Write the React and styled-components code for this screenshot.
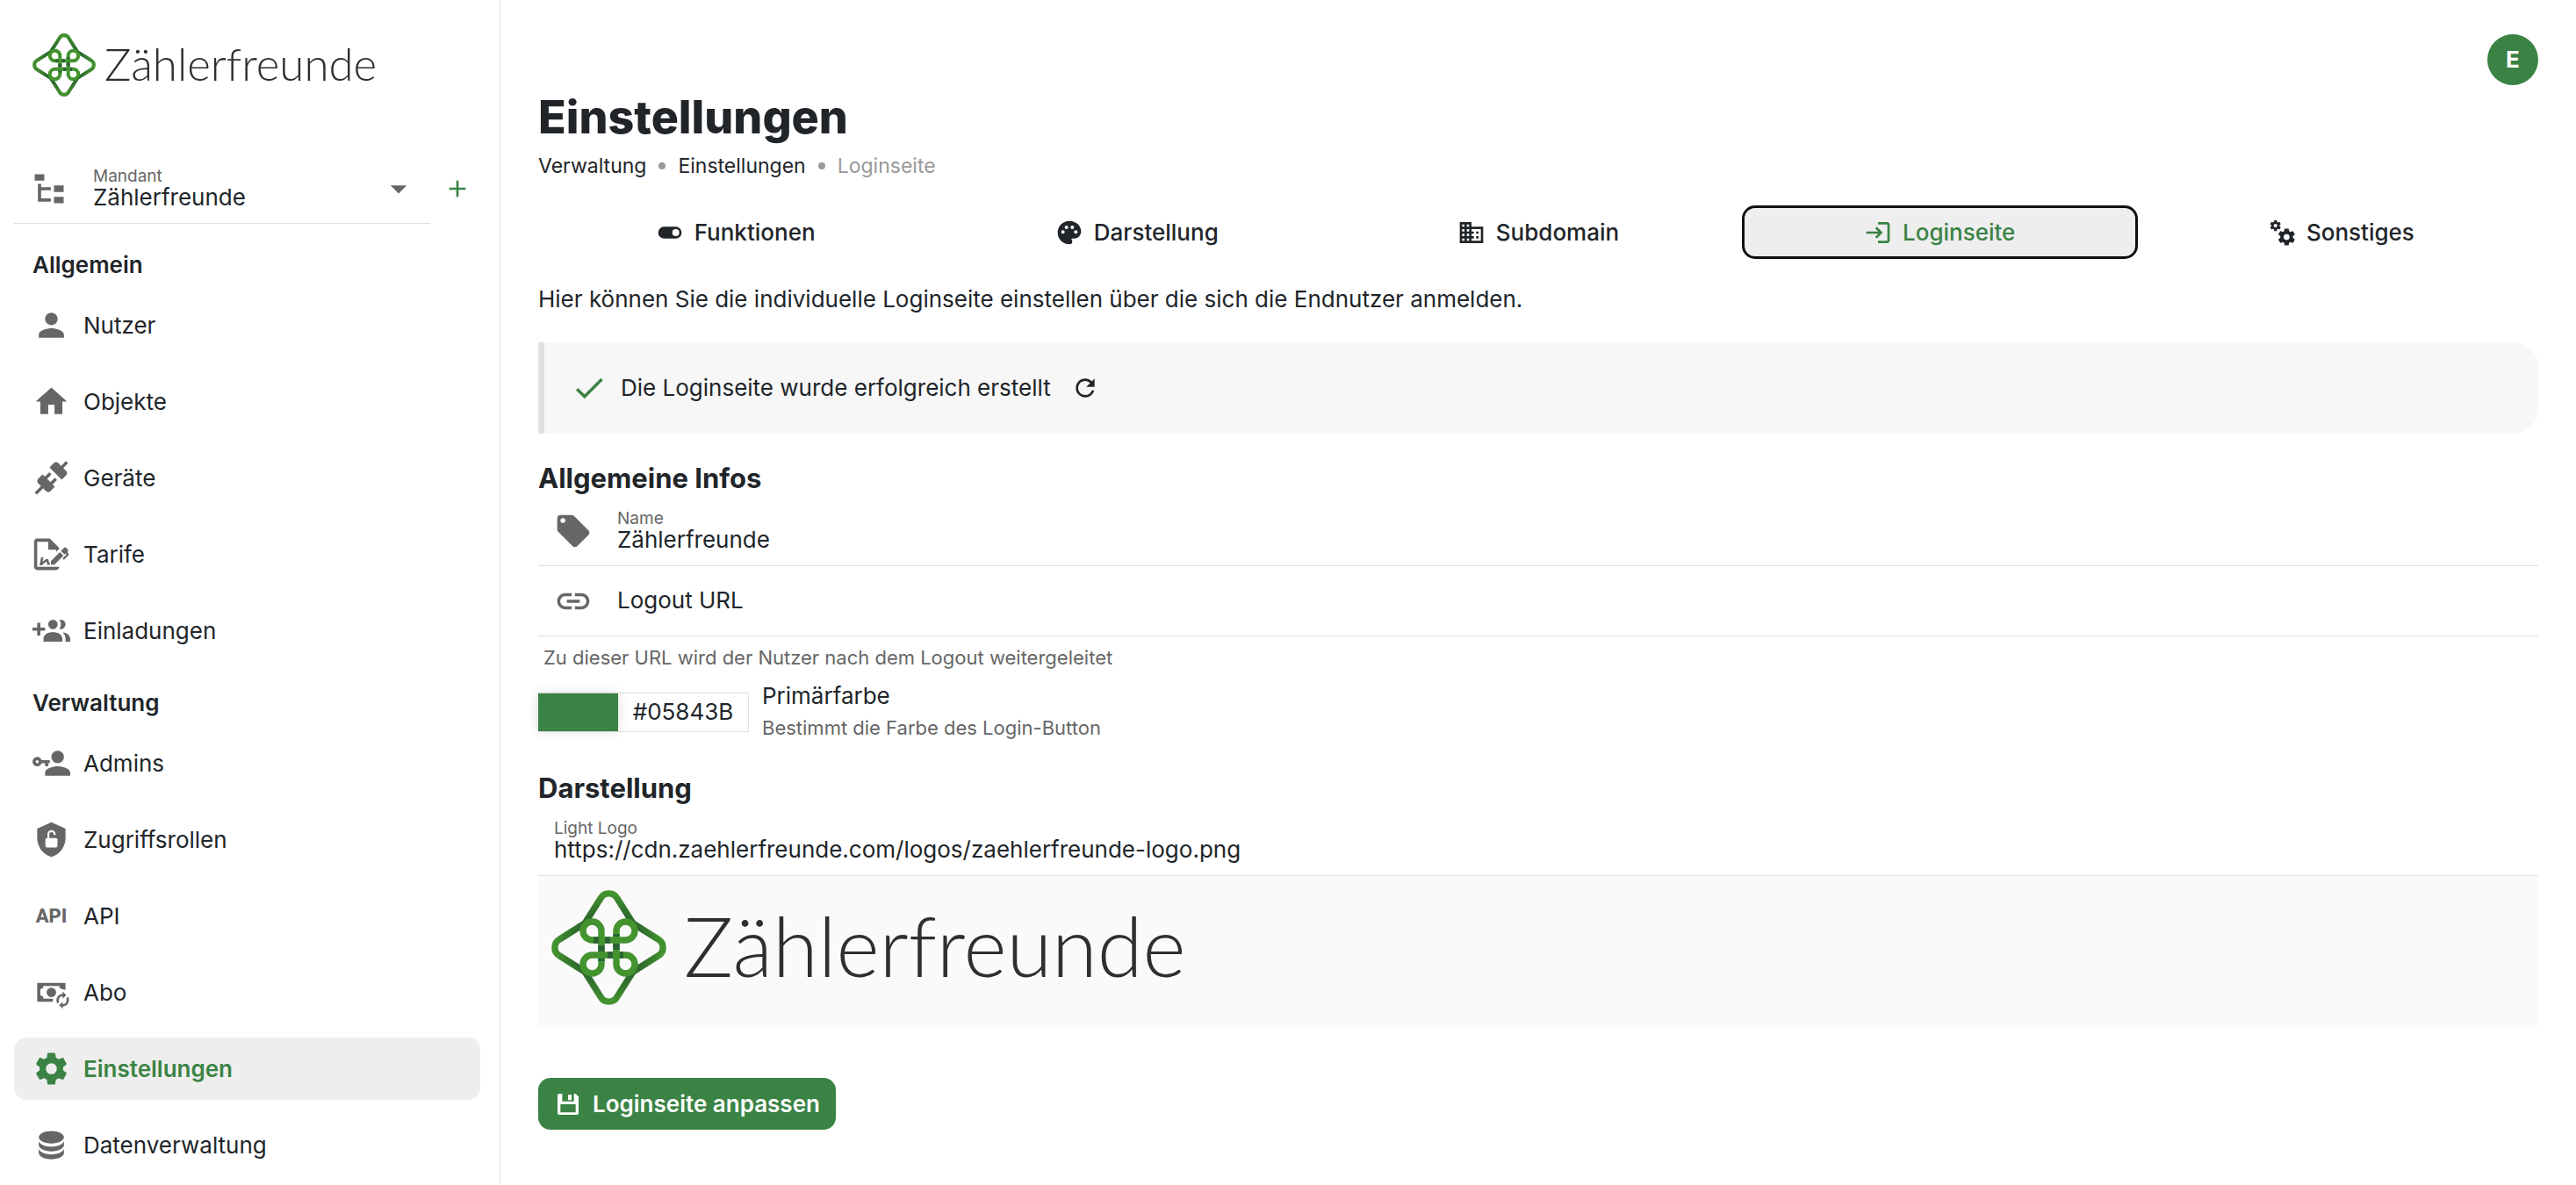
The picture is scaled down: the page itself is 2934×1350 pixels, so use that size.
import React from "react";
import styled, { createGlobalStyle, css } from "styled-components";
import {
  MdPerson,
  MdHome,
  MdPalette,
  MdBusiness,
  MdLogin,
  MdLink,
  MdCheck,
  MdRefresh,
  MdAdd,
  MdArrowDropDown,
} from "react-icons/md";

const c = {
  text: "#212529",
  muted: "#666666",
  faint: "#999999",
  green: "#3a8344",
  line: "#e0e0e0",
  active: "#eeeeee",
};

const GlobalStyle = createGlobalStyle`
  *, *::before, *::after { box-sizing: border-box; }
  body {
    margin: 0;
    background: #ffffff;
    color: ${c.text};
    font-family: Inter, "Noto Sans", sans-serif;
    font-size: 26px;
    line-height: 40px;
  }
  h1, h2, p, ul, ol { margin: 0; padding: 0; }
  ul, ol { list-style: none; }
  a { color: inherit; text-decoration: none; }
  button, input, select { font: inherit; color: inherit; }
  svg { display: block; flex: none; }
`;

/* ---------- icons ---------- */

const Svg = ({ size = 24, children, ...rest }) => (
  <svg width={size} height={size} viewBox="0 0 24 24" fill="currentColor" aria-hidden="true" {...rest}>
    {children}
  </svg>
);

const COG =
  "M12,15.5A3.5,3.5 0 0,1 8.5,12A3.5,3.5 0 0,1 12,8.5A3.5,3.5 0 0,1 15.5,12A3.5,3.5 0 0,1 12,15.5M19.43,12.97C19.47,12.65 19.5,12.33 19.5,12C19.5,11.67 19.47,11.34 19.43,11L21.54,9.37C21.73,9.22 21.78,8.95 21.66,8.73L19.66,5.27C19.54,5.05 19.27,4.96 19.05,5.05L16.56,6.05C16.04,5.66 15.5,5.32 14.87,5.07L14.5,2.42C14.46,2.18 14.25,2 14,2H10C9.75,2 9.54,2.18 9.5,2.42L9.13,5.07C8.5,5.32 7.96,5.66 7.44,6.05L4.95,5.05C4.73,4.96 4.46,5.05 4.34,5.27L2.34,8.73C2.21,8.95 2.27,9.22 2.46,9.37L4.57,11C4.53,11.34 4.5,11.67 4.5,12C4.5,12.33 4.53,12.65 4.57,12.97L2.46,14.63C2.27,14.78 2.21,15.05 2.34,15.27L4.34,18.73C4.46,18.95 4.73,19.03 4.95,18.95L7.44,17.94C7.96,18.34 8.5,18.68 9.13,18.93L9.5,21.58C9.54,21.82 9.75,22 10,22H14C14.25,22 14.46,21.82 14.5,21.58L14.87,18.93C15.5,18.67 16.04,18.34 16.56,17.94L19.05,18.95C19.27,19.03 19.54,18.95 19.66,18.73L21.66,15.27C21.78,15.05 21.73,14.78 21.54,14.63L19.43,12.97Z";

const TreeIcon = (p) => (
  <Svg {...p}>
    <path d="M3,3H9V7H3V3M15,10H21V14H15V10M15,17H21V21H15V17M13,13H7V18H13V20H7L5,20V9H7V11H13V13Z" />
  </Svg>
);
const PlugIcon = (p) => (
  <Svg {...p}>
    <path d="M21.4 7.5C22.2 8.3 22.2 9.6 21.4 10.3L18.6 13.1L10.8 5.3L13.6 2.5C14.4 1.7 15.7 1.7 16.4 2.5L18.2 4.3L21.2 1.3L22.6 2.7L19.6 5.7L21.4 7.5M15.6 13.3L14.2 11.9L11.4 14.7L9.3 12.6L12.1 9.8L10.7 8.4L7.9 11.2L6.4 9.8L3.6 12.6C2.8 13.4 2.8 14.7 3.6 15.4L5.4 17.2L1.4 21.2L2.8 22.6L6.8 18.6L8.6 20.4C9.4 21.2 10.7 21.2 11.4 20.4L14.2 17.6L12.8 16.2L15.6 13.3Z" />
  </Svg>
);
const SignIcon = (p) => (
  <Svg {...p}>
    <path d="M19.7 12.9L14 18.6H11.7V16.3L17.4 10.6L19.7 12.9M23.1 12.1C23.1 12.4 22.8 12.7 22.5 13L20 15.5L19.1 14.6L21.7 12L21.1 11.4L20.4 12.1L18.1 9.8L20.3 7.7C20.5 7.5 20.9 7.5 21.2 7.7L22.6 9.1C22.8 9.3 22.8 9.7 22.6 10C22.4 10.2 22.2 10.4 22.2 10.6C22.2 10.8 22.4 11 22.6 11.2C22.9 11.5 23.2 11.8 23.1 12.1M3 20V4H10V9H15V10.5L17 8.5V8L11 2H3C1.9 2 1 2.9 1 4V20C1 21.1 1.9 22 3 22H15C16.1 22 17 21.1 17 20H3M11 17.1C10.8 17.1 10.6 17.2 10.5 17.2L10 15H8.5L6.4 16.7L7 14H5.5L4.5 19H6L8.9 16.4L9.5 18.7H10.5L11 18.6V17.1Z" />
  </Svg>
);
const InviteIcon = (p) => (
  <Svg {...p}>
    <path d="M19 17V19H7V17S7 13 13 13 19 17 19 17M16 8A3 3 0 1 0 13 11A3 3 0 0 0 16 8M19.2 13.06A5.6 5.6 0 0 1 21 17V19H24V17S24 13.55 19.2 13.06M18 5A2.91 2.91 0 0 0 17.11 5.14A5 5 0 0 1 17.11 10.86A2.91 2.91 0 0 0 18 11A3 3 0 0 0 18 5M8 10H5V7H3V10H0V12H3V15H5V12H8Z" />
  </Svg>
);
const AdminIcon = (p) => (
  <Svg {...p}>
    <path d="M11 10V12H10V14H8V12H5.83C5.42 13.17 4.31 14 3 14A3 3 0 0 1 0 11A3 3 0 0 1 3 8C4.31 8 5.42 8.83 5.83 10H11M3 10A1 1 0 0 0 2 11A1 1 0 0 0 3 12A1 1 0 0 0 4 11A1 1 0 0 0 3 10M16 14C18.67 14 24 15.34 24 18V20H8V18C8 15.34 13.33 14 16 14M16 12A4 4 0 0 1 12 8A4 4 0 0 1 16 4A4 4 0 0 1 20 8A4 4 0 0 1 16 12Z" />
  </Svg>
);
const ShieldIcon = (p) => (
  <Svg {...p}>
    <path d="M12 1L3 5V11C3 16.55 6.84 21.74 12 23C17.16 21.74 21 16.55 21 11V5L12 1Z" />
    <rect x="8.2" y="11" width="7.7" height="6" rx="0.9" fill="#fff" />
    <path d="M10.1 11.4V8.6A2 2 0 0 1 14.1 8.6V9.1" fill="none" stroke="#fff" strokeWidth="1.2" />
  </Svg>
);
const CashIcon = (p) => (
  <Svg {...p}>
    <path d="M12 15C10.3 15 9 13.7 9 12S10.3 9 12 9 15 10.3 15 12 13.7 15 12 15M7 16C7 14.9 6.1 14 5 14V10C6.1 10 7 9.1 7 8H17C17 9.1 17.9 10 19 10V10.1C19.7 10.1 20.4 10.2 21 10.5V6H3V18H13.1C13 17.7 13 17.3 13 17C13 16.7 13 16.3 13.1 16H7Z" />
    <path
      transform="translate(38.2 -0.5) scale(-1 1)"
      d="M19 12V13.5A4 4 0 0 1 23 17.5C23 18.32 22.75 19.08 22.33 19.71L21.24 18.62C21.41 18.28 21.5 17.9 21.5 17.5A2.5 2.5 0 0 0 19 15V16.5L16.75 14.25L19 12M19 23V21.5A4 4 0 0 1 15 17.5C15 16.68 15.25 15.92 15.67 15.29L16.76 16.38C16.59 16.72 16.5 17.1 16.5 17.5A2.5 2.5 0 0 0 19 20V18.5L21.25 20.75L19 23Z"
    />
  </Svg>
);
const CogIcon = (p) => (
  <Svg {...p}>
    <path d={COG} />
  </Svg>
);
const CogsIcon = (p) => (
  <Svg {...p}>
    <path d={COG} transform="translate(1 0.5) scale(0.46)" />
    <path d={COG} transform="translate(7.4 7.1) scale(0.72)" />
  </Svg>
);
const DatabaseIcon = (p) => (
  <Svg {...p}>
    <path d="M12,3C7.58,3 4,4.79 4,7C4,9.21 7.58,11 12,11C16.42,11 20,9.21 20,7C20,4.79 16.42,3 12,3M4,9V12C4,14.21 7.58,16 12,16C16.42,16 20,14.21 20,12V9C20,11.21 16.42,13 12,13C7.58,13 4,11.21 4,9M4,14V17C4,19.21 7.58,21 12,21C16.42,21 20,19.21 20,17V14C20,16.21 16.42,18 12,18C7.58,18 4,16.21 4,14Z" />
  </Svg>
);
const ToggleIcon = (p) => (
  <Svg {...p}>
    <path d="M17,7H7A5,5 0 0,0 2,12A5,5 0 0,0 7,17H17A5,5 0 0,0 22,12A5,5 0 0,0 17,7M17,15A3,3 0 0,1 14,12A3,3 0 0,1 17,9A3,3 0 0,1 20,12A3,3 0 0,1 17,15Z" />
  </Svg>
);
const TagIcon = (p) => (
  <Svg {...p}>
    <path d="M5.5,7A1.5,1.5 0 0,1 4,5.5A1.5,1.5 0 0,1 5.5,4A1.5,1.5 0 0,1 7,5.5A1.5,1.5 0 0,1 5.5,7M21.41,11.58L12.41,2.58C12.05,2.22 11.55,2 11,2H4C2.89,2 2,2.89 2,4V11C2,11.55 2.22,12.05 2.59,12.41L11.58,21.41C11.95,21.77 12.45,22 13,22C13.55,22 14.05,21.77 14.41,21.41L21.41,14.41C21.78,14.05 22,13.55 22,13C22,12.44 21.77,11.94 21.41,11.58Z" />
  </Svg>
);
const SaveIcon = (p) => (
  <Svg {...p}>
    <path
      fillRule="evenodd"
      d="M3 4.5A1.5 1.5 0 0 1 4.5 3H7V9.5H17V3H18.5L21 5.5V19.5A1.5 1.5 0 0 1 19.5 21H4.5A1.5 1.5 0 0 1 3 19.5ZM5.5 12V19H18.5V12ZM12 4H15V8.5H12Z"
    />
  </Svg>
);

/* ---------- logo ---------- */

const LogoRow = styled.span`
  display: flex;
  align-items: flex-start;
  gap: ${(p) => (p.$large ? 20 : 10)}px;
  color: #2f2f2f;
  font-family: Lato, sans-serif;
  font-weight: 300;
  font-size: ${(p) => (p.$large ? 94 : 51)}px;
  line-height: ${(p) => (p.$large ? 126 : 70)}px;
`;

const Logo = ({ large }) => {
  const size = large ? 131 : 72;
  const id = large ? "arm-l" : "arm-s";
  return (
    <LogoRow $large={large}>
      <svg width={size} height={size} viewBox="0 0 131 131" fill="none" strokeWidth="7.4" strokeLinejoin="round" aria-hidden="true">
        <defs>
          <radialGradient id={id} gradientUnits="userSpaceOnUse" cx="65.5" cy="65.5" r="64">
            <stop offset="0.55" stopColor="#285f2c" />
            <stop offset="0.95" stopColor="#43932f" />
          </radialGradient>
        </defs>
        <path
          stroke={`url(#${id})`}
          d="M38 38L56 9.500C60 2 71 2 75 9.500L93 38L121.500 56C129 60 129 71 121.500 75L93 93L75 121.500C71 129 60 129 56 121.500L38 93L9.500 75C2 71 2 60 9.500 56Z"
        />
        <path
          stroke="#43932f"
          d="M57 46.500V84.500A10.500 10.500 0 1 1 46.500 74H84.500A10.500 10.500 0 1 1 74 84.500V46.500A10.500 10.500 0 1 1 84.500 57H46.500A10.500 10.500 0 1 1 57 46.500Z"
        />
        <path stroke="#2a6433" d="M48 57H54M61 57H67M74 50V53M74 61V68M57 63V70M57 78V81M64 74H70M78 74H82" />
      </svg>
      Zählerfreunde
    </LogoRow>
  );
};

/* ---------- shell ---------- */

const Page = styled.div`
  display: flex;
  min-height: 100vh;
`;

const Sidebar = styled.aside`
  flex: 0 0 570px;
  padding: 38px 22px 8px 16px;
  border-right: 1px solid ${c.line};
`;

const Brand = styled.a`
  display: block;
  padding-left: 21px;
  margin-bottom: 65px;
`;

const TenantRow = styled.div`
  display: flex;
  align-items: center;
  gap: 15px;
`;

const AddButton = styled.button`
  display: flex;
  margin-right: 10px;
  padding: 0;
  border: 0;
  background: none;
  color: ${c.green};
`;

const GroupTitle = styled.h2`
  margin: 27px 0 13px;
  padding-left: 21px;
  font-size: 26px;
  font-weight: 600;
`;

const NavList = styled.ul`
  display: flex;
  flex-direction: column;
  gap: 16px;
`;

const NavLink = styled.a`
  display: flex;
  align-items: center;
  gap: 15px;
  height: 71px;
  padding-left: 21px;
  border-radius: 14px;
  background: ${(p) => (p.$active ? c.active : "none")};
  color: ${(p) => (p.$active ? c.green : c.text)};
  font-weight: ${(p) => (p.$active ? 600 : 400)};
  svg { color: ${(p) => (p.$active ? c.green : c.muted)}; }
`;

const ApiMark = styled.span`
  width: 43px;
  color: ${c.muted};
  font-family: Roboto, sans-serif;
  font-size: 22px;
  font-weight: 800;
  text-align: center;
`;

const Main = styled.main`
  flex: 1;
  min-width: 0;
  padding: 39px 43px 60px;
`;

const TopBar = styled.div`
  display: flex;
  justify-content: flex-end;
`;

const Avatar = styled.button`
  width: 58px;
  height: 58px;
  padding: 0;
  border: 0;
  border-radius: 50%;
  background: ${c.green};
  color: #ffffff;
  font-weight: 700;
`;

const Title = styled.h1`
  margin-top: 5px;
  font-size: 52px;
  font-weight: 800;
  line-height: 64px;
`;

const Crumbs = styled.ol`
  display: flex;
  align-items: center;
  gap: 14px;
  margin-top: 7px;
  font-size: 23px;
  line-height: 32px;
`;

const Crumb = styled.li`
  display: flex;
  align-items: center;
  gap: 14px;
  color: ${(p) => (p.$current ? c.faint : c.text)};
  &:not(:first-child)::before {
    content: "";
    width: 8px;
    height: 8px;
    border-radius: 50%;
    background: ${c.faint};
  }
`;

const Tabs = styled.div`
  display: grid;
  grid-template-columns: repeat(5, 1fr);
  gap: 8px;
  margin-top: 30px;
`;

const Tab = styled.button`
  display: flex;
  align-items: center;
  justify-content: center;
  gap: 12px;
  height: 59px;
  padding: 0;
  border: 0;
  border-radius: 14px;
  background: none;
  font-weight: 500;
  ${(p) =>
    p.$active &&
    css`
      background: ${c.active};
      color: ${c.green};
      outline: 3px solid #101010;
      outline-offset: -2px;
    `}
`;

const Intro = styled.p`
  margin-top: 27px;
`;

const Alert = styled.div`
  display: flex;
  align-items: center;
  height: 104px;
  margin-top: 29px;
  padding-left: 30px;
  border-left: 7px solid ${c.line};
  border-radius: 0 28px 28px 0;
  background: #f7f7f7;
`;

const AlertIcon = styled.span`
  margin-right: 15px;
  color: ${c.green};
`;

const IconButton = styled.button`
  display: flex;
  margin-left: 23px;
  padding: 0;
  border: 0;
  background: none;
`;

const SectionTitle = styled.h2`
  margin-top: 31px;
  font-size: 31px;
  font-weight: 700;
  line-height: 40px;
`;

/* ---------- form fields ---------- */

const Field = styled.div`
  display: flex;
  flex: 1;
  align-items: center;
  gap: 28px;
  min-height: 80px;
  padding: 0 14px 0 18px;
  border-bottom: 1px solid ${c.line};
  svg { color: ${c.muted}; }
`;

const FieldBody = styled.div`
  display: flex;
  flex: 1;
  flex-direction: column;
  min-width: 0;
`;

const Label = styled.label`
  color: ${c.muted};
  font-size: 19px;
  line-height: 22px;
`;

const control = css`
  width: 100%;
  height: 36px;
  margin: -5px 0 -3px;
  padding: 0;
  border: 0;
  outline: 0;
  background: none;
  line-height: 36px;
  appearance: none;
`;

const Input = styled.input`
  ${control}
  &::placeholder { color: ${c.text}; opacity: 1; }
`;

const Select = styled.select`
  ${control}
`;

const Hint = styled.p`
  margin-top: 8px;
  padding-left: 6px;
  color: ${c.muted};
  font-size: 22px;
  line-height: 32px;
`;

const ColorRow = styled.div`
  display: flex;
  align-items: center;
  gap: 15px;
  margin-top: 10px;
`;

const ColorBox = styled.div`
  display: flex;
  align-items: center;
  width: 240px;
  height: 45px;
  border: 1px solid ${c.line};
  border-left: 0;
`;

const Swatch = styled.input`
  flex: none;
  width: 91px;
  height: 43px;
  padding: 0;
  border: 0;
  appearance: none;
  background: none;
  box-shadow: 0 0 12px rgba(0, 0, 0, 0.14);
  &::-webkit-color-swatch-wrapper { padding: 0; }
  &::-webkit-color-swatch { border: 0; }
`;

const HexInput = styled.input`
  flex: 1;
  min-width: 0;
  padding: 0;
  border: 0;
  outline: 0;
  background: none;
  text-align: center;
`;

const ColorText = styled.div`
  display: flex;
  flex-direction: column;
  line-height: 36px;
`;

const ColorHint = styled.span`
  color: ${c.muted};
  font-size: 22px;
`;

const Preview = styled.div`
  padding: 16px 15px 25px;
  background: #fafafa;
`;

const SubmitButton = styled.button`
  display: flex;
  align-items: center;
  gap: 12px;
  height: 59px;
  margin-top: 58px;
  padding: 0 18px;
  border: 0;
  border-radius: 14px;
  background: ${c.green};
  color: #ffffff;
  font-weight: 600;
`;

/* ---------- data ---------- */

const groups = [
  {
    title: "Allgemein",
    items: [
      ["Nutzer", MdPerson],
      ["Objekte", MdHome],
      ["Geräte", PlugIcon],
      ["Tarife", SignIcon],
      ["Einladungen", InviteIcon],
    ],
  },
  {
    title: "Verwaltung",
    items: [
      ["Admins", AdminIcon],
      ["Zugriffsrollen", ShieldIcon],
      ["API", null],
      ["Abo", CashIcon],
      ["Einstellungen", CogIcon],
      ["Datenverwaltung", DatabaseIcon],
    ],
  },
];

const tabs = [
  ["Funktionen", ToggleIcon],
  ["Darstellung", MdPalette],
  ["Subdomain", MdBusiness],
  ["Loginseite", MdLogin],
  ["Sonstiges", CogsIcon],
];

export default function App() {
  return (
    <>
      <GlobalStyle />
      <Page>
        <Sidebar>
          <Brand href="#">
            <Logo />
          </Brand>
          <TenantRow>
            <Field>
              <TreeIcon size={44} />
              <FieldBody>
                <Label htmlFor="tenant">Mandant</Label>
                <Select id="tenant" defaultValue="zf">
                  <option value="zf">Zählerfreunde</option>
                </Select>
              </FieldBody>
              <MdArrowDropDown size={44} aria-hidden="true" />
            </Field>
            <AddButton type="button" aria-label="Mandant hinzufügen">
              <MdAdd size={32} />
            </AddButton>
          </TenantRow>
          <nav>
            {groups.map((group) => (
              <React.Fragment key={group.title}>
                <GroupTitle>{group.title}</GroupTitle>
                <NavList>
                  {group.items.map(([label, Icon]) => (
                    <li key={label}>
                      <NavLink href="#" $active={label === "Einstellungen"}>
                        {Icon ? <Icon size={43} /> : <ApiMark aria-hidden="true">API</ApiMark>}
                        {label}
                      </NavLink>
                    </li>
                  ))}
                </NavList>
              </React.Fragment>
            ))}
          </nav>
        </Sidebar>

        <Main>
          <TopBar>
            <Avatar type="button">E</Avatar>
          </TopBar>
          <Title>Einstellungen</Title>
          <Crumbs>
            <Crumb>
              <a href="#">Verwaltung</a>
            </Crumb>
            <Crumb>
              <a href="#">Einstellungen</a>
            </Crumb>
            <Crumb $current>Loginseite</Crumb>
          </Crumbs>

          <Tabs role="tablist">
            {tabs.map(([label, Icon]) => (
              <Tab key={label} type="button" role="tab" aria-selected={label === "Loginseite"} $active={label === "Loginseite"}>
                <Icon size={32} />
                {label}
              </Tab>
            ))}
          </Tabs>

          <Intro>Hier können Sie die individuelle Loginseite einstellen über die sich die Endnutzer anmelden.</Intro>

          <Alert role="status">
            <AlertIcon>
              <MdCheck size={42} />
            </AlertIcon>
            Die Loginseite wurde erfolgreich erstellt
            <IconButton type="button" aria-label="Aktualisieren">
              <MdRefresh size={32} />
            </IconButton>
          </Alert>

          <SectionTitle>Allgemeine Infos</SectionTitle>
          <Field>
            <TagIcon size={44} />
            <FieldBody>
              <Label htmlFor="name">Name</Label>
              <Input id="name" defaultValue="Zählerfreunde" />
            </FieldBody>
          </Field>
          <Field>
            <MdLink size={44} aria-hidden="true" />
            <FieldBody>
              <Input aria-label="Logout URL" placeholder="Logout URL" />
            </FieldBody>
          </Field>
          <Hint>Zu dieser URL wird der Nutzer nach dem Logout weitergeleitet</Hint>
          <ColorRow>
            <ColorBox>
              <Swatch type="color" defaultValue="#3a8344" aria-label="Farbe wählen" />
              <HexInput id="hex" defaultValue="#05843B" />
            </ColorBox>
            <ColorText>
              <label htmlFor="hex">Primärfarbe</label>
              <ColorHint>Bestimmt die Farbe des Login-Button</ColorHint>
            </ColorText>
          </ColorRow>

          <SectionTitle>Darstellung</SectionTitle>
          <Field>
            <FieldBody>
              <Label htmlFor="light-logo">Light Logo</Label>
              <Input id="light-logo" defaultValue="https://cdn.zaehlerfreunde.com/logos/zaehlerfreunde-logo.png" />
            </FieldBody>
          </Field>
          <Preview>
            <Logo large />
          </Preview>

          <SubmitButton type="submit">
            <SaveIcon size={32} />
            Loginseite anpassen
          </SubmitButton>
        </Main>
      </Page>
    </>
  );
}
